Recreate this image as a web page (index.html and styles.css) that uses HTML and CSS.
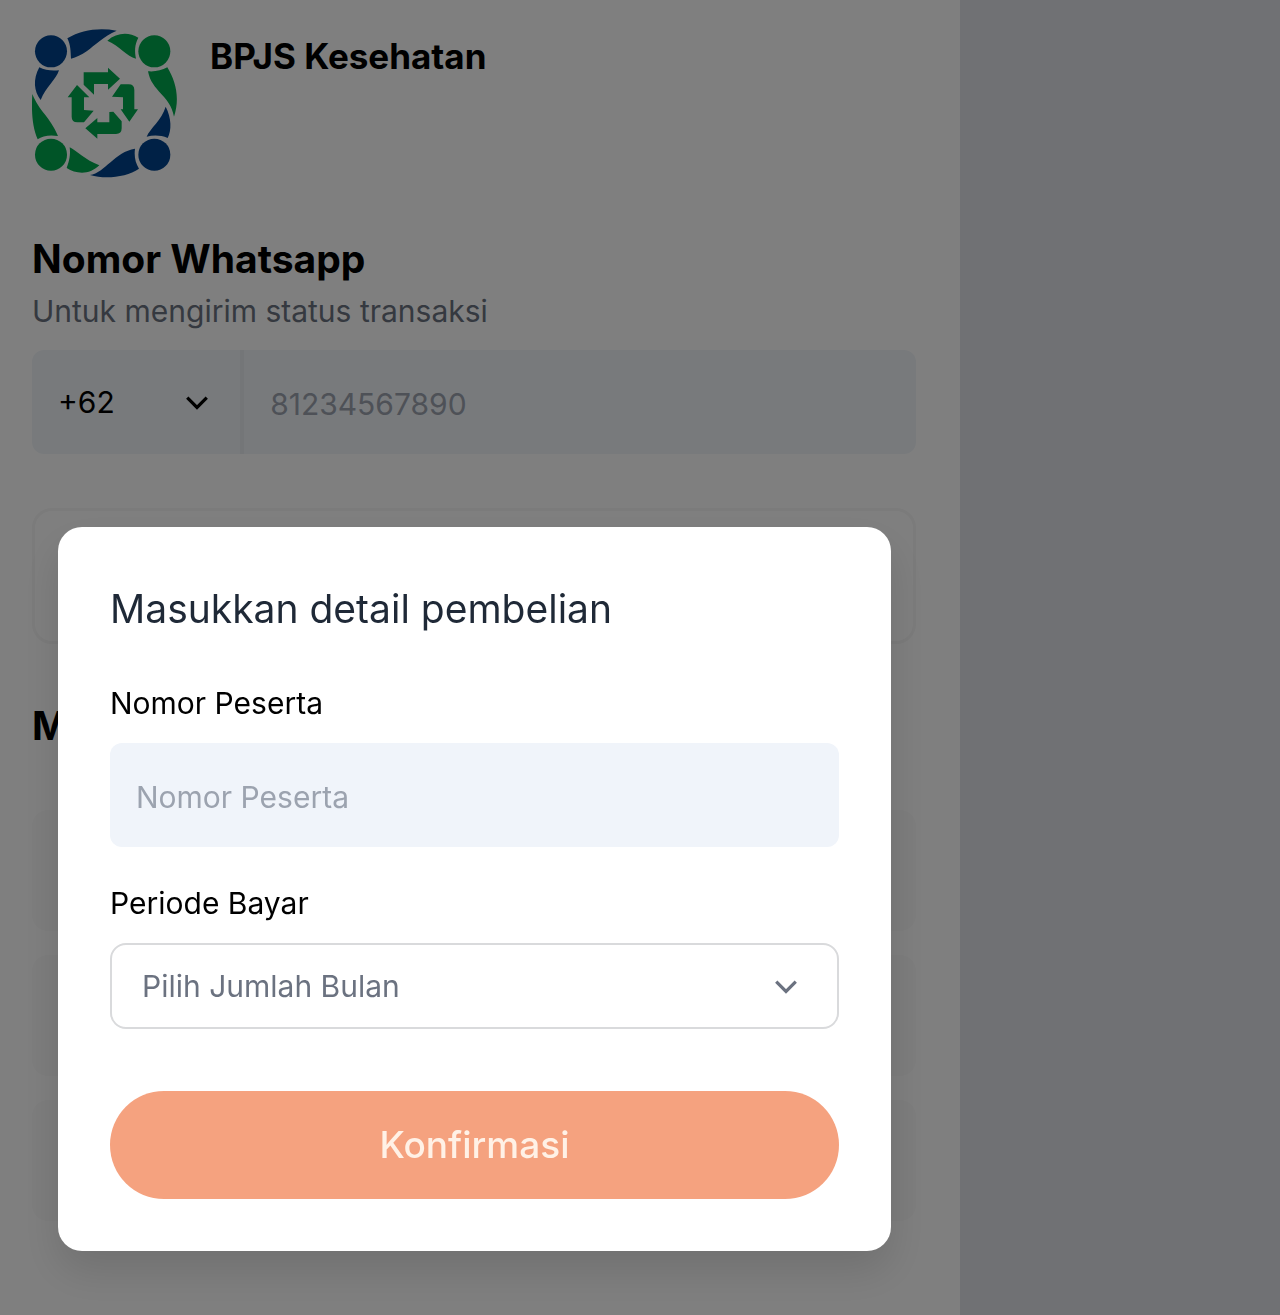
FILE: index.html
```html
<!DOCTYPE html>
<html lang="id">
<head>
    <meta charset="UTF-8">
    <meta name="viewport" content="width=device-width, initial-scale=1.0">
    <title>BPJS Kesehatan</title>
    <link rel="stylesheet" href="styles.css">
</head>
<body>
    <main class="page">
        <header class="product">
            <svg class="logo" viewBox="36 27 438 450" role="img" aria-label="BPJS Kesehatan">
                <g class="logo-blue">
                    <circle cx="93" cy="94" r="48"/>
                    <circle cx="403" cy="404" r="48"/>
                    <path d="M142 55C185 30 235 22 290 32C250 50 225 75 200 94C185 105 168 112 153 116C152 95 152 75 142 55Z"/>
                    <path d="M58 142C75 152 98 153 117 151C108 180 78 200 62 240C42 215 38 178 58 142Z"/>
                    <path d="M437 260C455 295 455 330 443 354C422 345 400 345 380 350C390 325 425 300 437 260Z"/>
                    <path d="M210 465C255 458 285 395 345 386C342 410 346 428 357 446C320 470 260 480 210 465Z"/>
                </g>
                <g class="logo-green">
                    <circle cx="403" cy="94" r="48"/>
                    <circle cx="93" cy="404" r="48"/>
                    <path d="M262 62C290 38 325 35 355 53C343 75 344 96 348 116C320 110 300 78 262 62Z"/>
                    <path d="M384 154C405 156 425 151 442 142C468 185 480 235 462 290C450 225 395 215 384 154Z"/>
                    <path d="M37 222C58 275 90 290 114 348C90 344 67 347 53 358C36 320 34 270 37 222Z"/>
                    <path d="M149 382C170 392 195 420 238 436C208 466 168 462 140 444C148 422 152 405 149 382Z"/>
                    <path d="M191 157H264V143L300 176L264 209V192H222V224L191 194Z"/>
                    <path d="M302 193H326Q343 193 343 210V268H354L328 305L302 268H309V232L276 230Z"/>
                    <path d="M305 304V325Q305 342 288 342H232V356L196 325L232 294V307H268V276L280 275Z"/>
                    <path d="M155 290V232H143L171 195L208 232H192V270L221 272L192 307H172Q155 307 155 290Z"/>
                </g>
            </svg>
            <h1 class="product-name">BPJS Kesehatan</h1>
        </header>

        <section class="contact">
            <h2 class="title"><label for="phone">Nomor Whatsapp</label></h2>
            <p class="hint">Untuk mengirim status transaksi</p>
            <div class="phone">
                <div class="select-wrap code">
                    <select class="code-select" aria-label="Kode negara">
                        <option>+62</option>
                    </select>
                    <svg class="chevron" viewBox="0 0 24 24" aria-hidden="true"><path d="M3 8l9 9 9-9"/></svg>
                </div>
                <input class="phone-input" id="phone" type="tel" placeholder="81234567890">
            </div>
        </section>

        <div class="purchase"></div>

        <section class="methods">
            <h2 class="title">M</h2>
            <div class="method"></div>
            <div class="method"></div>
            <div class="method"></div>
        </section>
    </main>

    <div class="overlay">
        <form class="modal" role="dialog" aria-labelledby="modal-title">
            <h3 class="modal-title" id="modal-title">Masukkan detail pembelian</h3>
            <label class="label" for="member">Nomor Peserta</label>
            <input class="field" id="member" type="text" placeholder="Nomor Peserta">
            <label class="label" for="period">Periode Bayar</label>
            <div class="select-wrap">
                <select class="period" id="period">
                    <option>Pilih Jumlah Bulan</option>
                </select>
                <svg class="chevron chevron-gray" viewBox="0 0 24 24" aria-hidden="true"><path d="M3 8l9 9 9-9"/></svg>
            </div>
            <button class="confirm" type="button">Konfirmasi</button>
        </form>
    </div>
</body>
</html>
```

FILE: styles.css
```css
* {
    box-sizing: border-box;
}

body {
    margin: 0;
    min-height: 100vh;
    background-color: #e0e2e9;
    color: #000;
    font-family: Inter, sans-serif;
    font-size: 30px;
    line-height: 40px;
}

h1, h2, h3, p {
    margin: 0;
}

input, select, button {
    font: inherit;
    border: none;
    outline: none;
}

.page {
    width: 75%;
    min-height: 100vh;
    padding: 29px 44px 28px 32px;
    background-color: #fff;
}

.product {
    display: flex;
    gap: 32px;
    margin-bottom: 54px;
}

.logo {
    width: 146px;
    height: 150px;
}

.logo-blue {
    fill: #00428c;
}

.logo-green {
    fill: #00a84e;
}

.product-name {
    padding-top: 7px;
    font-size: 35px;
    font-weight: 700;
}

.title {
    font-size: 39px;
    font-weight: 700;
    line-height: 52px;
}

.hint {
    line-height: 52px;
    color: #6b7280;
}

.phone {
    display: flex;
    height: 104px;
    margin-top: 13px;
    border-radius: 12px;
    background-color: #f1f5f9;
    overflow: hidden;
}

.select-wrap {
    position: relative;
    display: flex;
}

.code {
    width: 24%;
    border-right: 4px solid #e8ecf0;
}

.code-select {
    width: 100%;
    padding: 0 26px;
    appearance: none;
    background: transparent;
    color: #000;
}

.phone-input {
    flex: 1;
    min-width: 0;
    padding: 4px 26px 0;
    background: transparent;
}

.phone-input::placeholder,
.field::placeholder {
    color: #9ca3af;
    opacity: 1;
}

.chevron {
    position: absolute;
    top: 50%;
    right: 30px;
    width: 26px;
    height: 26px;
    margin-top: -13px;
    fill: none;
    stroke: #000;
    stroke-width: 3;
    pointer-events: none;
}

.purchase {
    height: 136px;
    margin: 54px 0 56px;
    border: 3px solid #f6f6f6;
    border-radius: 20px;
}

.methods {
    display: grid;
    gap: 24px;
}

.methods .title {
    margin-bottom: 34px;
}

.method {
    height: 121px;
    border-radius: 16px;
    background-color: #fafafa;
}

.overlay {
    position: fixed;
    inset: 0;
    display: flex;
    align-items: flex-end;
    padding: 64px 58px;
    background-color: rgba(0, 0, 0, 0.5);
}

.modal {
    display: flex;
    flex-direction: column;
    width: 833px;
    max-width: 100%;
    padding: 52px;
    border-radius: 24px;
    background-color: #fff;
    box-shadow: 0 20px 40px rgba(0, 0, 0, 0.12);
}

.modal-title {
    margin-bottom: 44px;
    color: #1f2937;
    font-size: 39px;
    font-weight: 400;
    line-height: 60px;
}

.label {
    margin-bottom: 20px;
}

.field {
    height: 104px;
    margin-bottom: 36px;
    padding: 4px 26px 0;
    border-radius: 12px;
    background-color: #f0f4fa;
}

.period {
    width: 100%;
    height: 86px;
    padding: 0 30px;
    border: 2px solid #d9dadc;
    border-radius: 16px;
    appearance: none;
    background-color: #fff;
    color: #6b7280;
}

.chevron-gray {
    right: 40px;
    stroke: #6b7280;
}

.confirm {
    height: 108px;
    margin-top: 62px;
    border-radius: 54px;
    background-color: #f5a27f;
    color: #fff1e6;
    font-size: 37px;
    font-weight: 500;
    cursor: pointer;
}
```
